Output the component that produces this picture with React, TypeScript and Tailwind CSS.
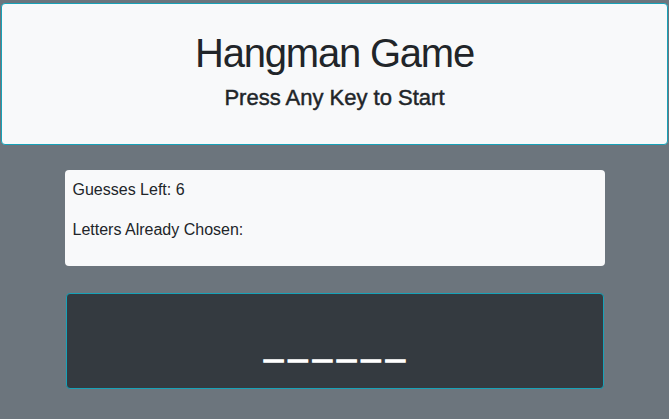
import React from 'react';

const word = '______';

export default function App() {
  return (
    <div className="min-h-[419px] bg-[#6c757d] pt-[3px] font-['Liberation_Sans',Arial,sans-serif] text-[#212529]">
      {/* Jumbotron header */}
      <div className="mx-px rounded border border-[#17a2b8] bg-[#f8f9fa] pt-[25px] pb-[26px] text-center">
        <h1 className="mb-[9px] text-[40px] leading-[48px] tracking-[-1.2px]">Hangman Game</h1>
        <h5 className="mb-2 text-[22px] leading-[24px] tracking-[0px] [-webkit-text-stroke:0.45px_#212529]">Press Any Key to Start</h5>
      </div>

      <div className="mx-auto mt-[25px] w-[540px]">
        {/* Stats */}
        <div className="rounded bg-[#f8f9fa] p-2 text-[16px] leading-[24px]">
          <p className="mb-4">Guesses Left: 6</p>
          <p className="mb-4">Letters Already Chosen:</p>
        </div>

        {/* Word display */}
        <div className="mx-px mt-[27px] h-24 rounded border border-[#17a2b8] bg-[#343a40] pt-[32px] text-center">
          <span className="mr-[-6px] text-[33px] leading-[35px] tracking-[6px] text-white [-webkit-text-stroke:1.5px_white]">{word}</span>
        </div>
      </div>
    </div>
  );
}
